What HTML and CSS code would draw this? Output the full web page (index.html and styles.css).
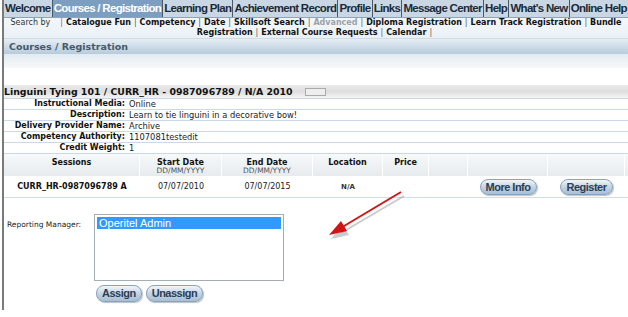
FILE: index.html
```html
<!DOCTYPE html>
<html lang="en">
<head>
    <meta charset="UTF-8">
    <title>Courses / Registration</title>
    <link rel="stylesheet" href="styles.css">
</head>
<body>
<div class="page">

    <div class="tabs">
        <span class="tab">Welcome</span>
        <span class="tab active">Courses / Registration</span>
        <span class="tab">Learning Plan</span>
        <span class="tab">Achievement Record</span>
        <span class="tab">Profile</span>
        <span class="tab">Links</span>
        <span class="tab">Message Center</span>
        <span class="tab">Help</span>
        <span class="tab">What's New</span>
        <span class="tab">Online Help</span>
    </div>

    <div class="subnav">
        <span class="search-by">Search by</span><span class="pipe red">|</span><span>Catalogue Fun</span><span class="pipe">|</span><span>Competency</span><span class="pipe">|</span><span>Date</span><span class="pipe">|</span><span>Skillsoft Search</span><span class="pipe">|</span><span class="disabled">Advanced</span><span class="pipe">|</span><span>Diploma Registration</span><span class="pipe">|</span><span>Learn Track Registration</span><span class="pipe">|</span><span>Bundle</span> <span>Registration</span><span class="pipe">|</span><span>External Course Requests</span><span class="pipe">|</span><span>Calendar</span><span class="pipe">|</span>
    </div>

    <div class="section-head">Courses / Registration</div>
    <div class="section-fade"></div>

    <div class="course">
        <div class="course-title">
            <span>Linguini Tying 101 / CURR_HR - 0987096789 / N/A 2010</span>
            <span class="mini-box"></span>
        </div>

        <div class="detail"><span class="label">Instructional Media:</span><span class="value">Online</span></div>
        <div class="detail"><span class="label">Description:</span><span class="value">Learn to tie linguini in a decorative bow!</span></div>
        <div class="detail"><span class="label">Delivery Provider Name:</span><span class="value">Archive</span></div>
        <div class="detail"><span class="label">Competency Authority:</span><span class="value">1107081testedit</span></div>
        <div class="detail"><span class="label">Credit Weight:</span><span class="value">1</span></div>

        <div class="sessions head">
            <div>Sessions</div>
            <div>Start Date<small>DD/MM/YYYY</small></div>
            <div>End Date<small>DD/MM/YYYY</small></div>
            <div>Location</div>
            <div>Price</div>
            <div></div>
            <div></div>
            <div></div>
        </div>
        <div class="sessions row">
            <div class="code">CURR_HR-0987096789 A</div>
            <div>07/07/2010</div>
            <div>07/07/2015</div>
            <div class="loc">N/A</div>
            <div></div>
            <div></div>
            <div><span class="pill">More Info</span></div>
            <div><span class="pill">Register</span></div>
        </div>
    </div>

    <div class="manager">
        <div class="manager-label">Reporting Manager:</div>
        <div class="manager-box">
            <div class="listbox">
                <div class="option selected">Operitel Admin</div>
            </div>
            <div class="manager-buttons">
                <span class="pill">Assign</span>
                <span class="pill">Unassign</span>
            </div>
        </div>
    </div>

    <svg class="arrow" width="90" height="56" viewBox="0 0 90 56">
        <line x1="77" y1="6" x2="14" y2="43" stroke="#999" stroke-width="2" opacity="0.5" transform="translate(2,2)"/>
        <polygon points="4,49 16,35 22,45" fill="#999" opacity="0.5" transform="translate(2,2)"/>
        <line x1="76" y1="4" x2="14" y2="41" stroke="#d11414" stroke-width="2"/>
        <polygon points="4,47 16,33 22,43" fill="#d11414"/>
    </svg>
</div>
</body>
</html>
```

FILE: styles.css
```css
body {
    margin: 0;
    background: #fff;
    font-family: "DejaVu Sans", Verdana, sans-serif;
    font-size: 8px;
    color: #111;
}

.page {
    position: relative;
    margin-left: 2px;
    width: 624px;
    height: 310px;
    border-left: 2px solid #7a7a7a;
}

.tabs {
    display: flex;
    height: 17px;
    background: #c9d7e4;
    border-bottom: 1px solid #8ea4b8;
    font-family: "Liberation Sans", Arial, sans-serif;
    font-weight: bold;
    font-size: 11.5px;
    letter-spacing: -0.7px;
}

.tab {
    flex: auto;
    padding: 0 1px;
    line-height: 17px;
    text-align: center;
    color: #1b2a38;
    border-right: 1px solid #4a5866;
    white-space: nowrap;
}

.tab:last-child {
    border-right: none;
}

.tab.active {
    background: #7c9fc1;
    color: #fff;
}

.subnav {
    height: 20px;
    padding: 0 4px;
    background: linear-gradient(#f3f7fa, #eaf1f6);
    font-weight: bold;
    line-height: 10px;
    text-align: center;
    color: #111;
}

.search-by {
    font-weight: normal;
    color: #333;
    margin-right: 7px;
}

.pipe {
    display: inline-block;
    margin: 0 3px;
    font-weight: normal;
    color: #555;
}

.pipe.red {
    color: #b0585e;
}

.disabled {
    color: #9aa2aa;
}

.section-head {
    height: 15px;
    padding-left: 5px;
    line-height: 15px;
    background: linear-gradient(#e6eef4, #c9d9e6 60%, #b7cbdb);
    border-top: 1px solid #cfdbe5;
    font-size: 9.5px;
    font-weight: bold;
    color: #46586a;
}

.section-fade {
    height: 14px;
    background: linear-gradient(#e3ebf1, #f7f9fb);
    margin-bottom: 17px;
}

.course-title {
    display: flex;
    align-items: center;
    height: 13px;
    background: linear-gradient(#ebebeb, #dedede 50%, #f4f4f4);
    border-bottom: 1px solid #c6d6e4;
    font-size: 9.4px;
    font-weight: bold;
    color: #111;
}

.mini-box {
    width: 19px;
    height: 6px;
    margin-left: 12px;
    border: 1px solid #aaa;
    background: #eee;
}

.detail {
    display: flex;
    height: 10px;
    line-height: 10px;
    border-bottom: 1px solid #c9d9e7;
}

.label {
    width: 121px;
    text-align: right;
    font-weight: bold;
    padding-right: 4px;
}

.value {
    color: #222;
    font-size: 8.3px;
}

.sessions {
    display: grid;
    grid-template-columns: 136px 82px 91px 70px 46px 39px 80px 77px;
    text-align: center;
}

.sessions.head {
    height: 22px;
    background: linear-gradient(#f7f9fa, #e6ebef);
    font-weight: bold;
}

.sessions.head > div {
    border-right: 1px solid #fff;
    padding-top: 5px;
    line-height: 8px;
}

.sessions.head small {
    display: block;
    font-size: 7.5px;
    font-weight: normal;
    color: #555;
}

.sessions.row {
    height: 21px;
    align-items: center;
    border-bottom: 1px solid #cfdde8;
    color: #222;
}

.sessions.row .code {
    font-weight: bold;
    color: #111;
}

.sessions.row .loc {
    font-size: 7px;
    font-weight: bold;
    color: #333;
}

.pill {
    display: inline-block;
    padding: 0 5px;
    height: 14px;
    line-height: 14px;
    border: 1px solid #8aa2bb;
    border-radius: 8px;
    background: linear-gradient(#f2f6fa, #c3d4e5 50%, #a7bfd6);
    box-shadow: 1px 1px 1px rgba(0, 0, 0, 0.25);
    font-family: "Liberation Sans", Arial, sans-serif;
    font-weight: bold;
    font-size: 11px;
    letter-spacing: -0.5px;
    color: #2d3e52;
}

.manager {
    display: flex;
    margin-top: 16px;
}

.manager-label {
    width: 87px;
    padding: 6px 0 0 3px;
    font-size: 7.5px;
    color: #222;
}

.listbox {
    width: 184px;
    height: 61px;
    padding: 2px;
    border: 1px solid #a5acb2;
}

.option {
    height: 12px;
    line-height: 12px;
    padding-left: 2px;
    font-family: "Liberation Sans", Arial, sans-serif;
    font-size: 11px;
}

.option.selected {
    background: #3399ff;
    color: #fff;
}

.manager-buttons {
    display: flex;
    gap: 4px;
    margin: 4px 0 0 2px;
}

.manager-buttons .pill {
    height: 15px;
    line-height: 15px;
}

.arrow {
    position: absolute;
    left: 321px;
    top: 188px;
}
```
